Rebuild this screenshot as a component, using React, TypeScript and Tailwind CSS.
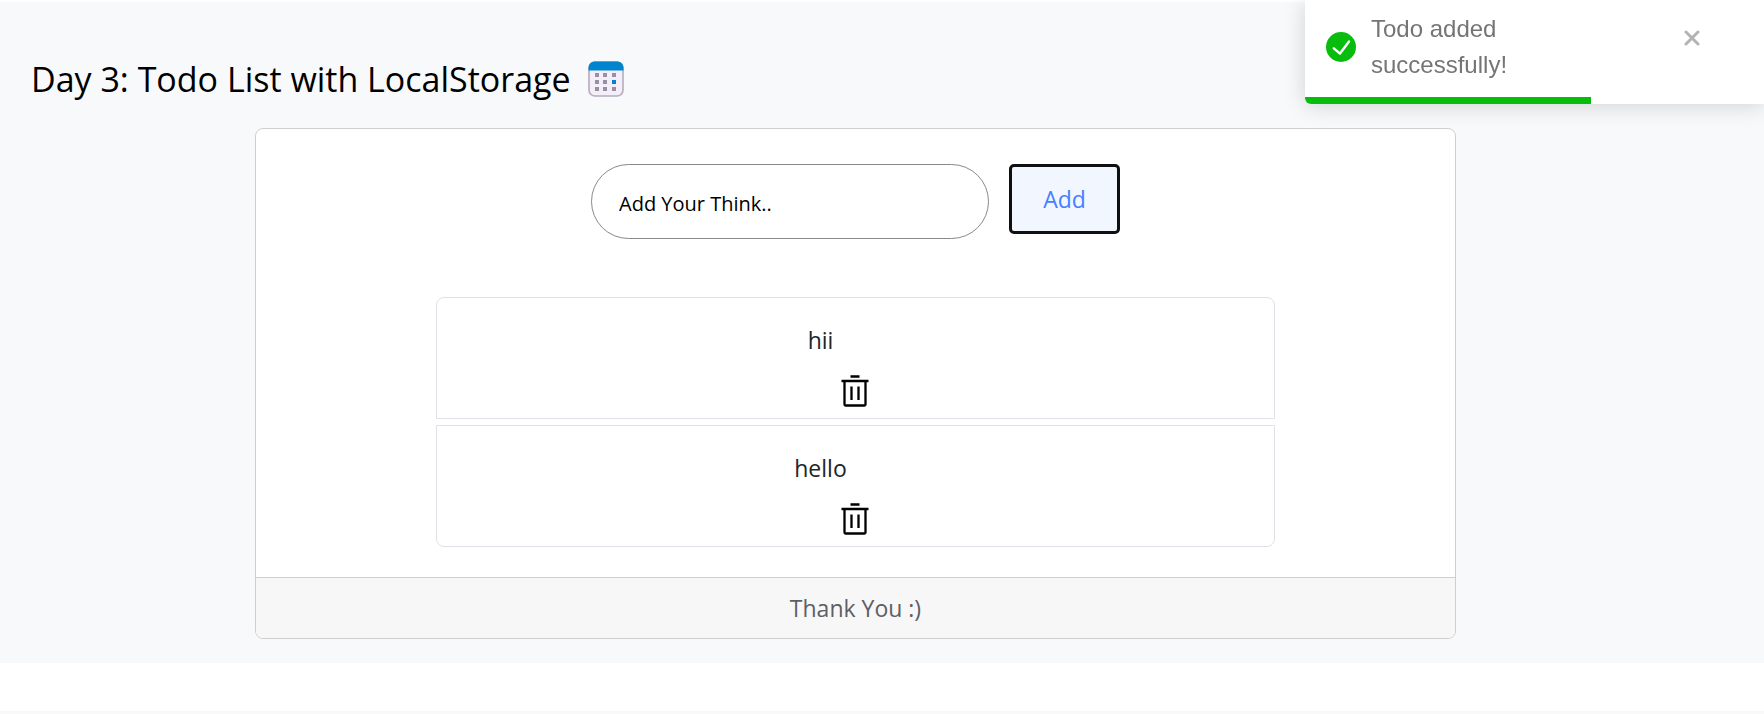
import { useState } from "react";

function CalendarIcon() {
  const cols = [7, 15, 24];
  const rows = [12, 19, 26];
  return (
    <svg viewBox="0 0 36 36" className="size-9 shrink-0" aria-hidden="true">
      <rect x="1" y="1" width="34" height="34" rx="6" fill="#f3eef8" stroke="#b4acbc" strokeWidth="1.6" />
      <path d="M.5 9.500V6.500A6 6 0 0 1 6.500 .5h23a6 6 0 0 1 6 6V9.500z" fill="#0084ce" />
      {rows.map((y) =>
        cols.map((x) => (
          <rect
            key={`${x}-${y}`}
            x={x}
            y={y}
            width="4"
            height="4"
            fill={x === 24 && y === 19 ? "#0084ce" : "#998ea4"}
          />
        ))
      )}
    </svg>
  );
}

function TrashIcon() {
  return (
    <svg viewBox="0 0 28 32" className="h-8 w-7" fill="none" stroke="#000" strokeWidth="2.300" aria-hidden="true">
      <path d="M9.500 1.500h9M.5 6h27" />
      <path d="M3.500 6v23.500a1 1 0 0 0 1 1h19a1 1 0 0 0 1-1V6" />
      <path d="M10.500 11.500V25M17.500 11.500V25" />
    </svg>
  );
}

function Toast({ onClose }: { onClose: () => void }) {
  return (
    <div
      role="status"
      className="fixed top-0 right-0 flex h-[104px] w-[459px] flex-col overflow-hidden rounded-bl-md bg-white font-['Liberation_Sans',Arial,sans-serif] shadow-[0_2px_22px_rgba(0,0,0,0.16)]"
    >
      <div className="flex grow items-start pr-16 pl-[21px]">
        <svg viewBox="0 0 30 30" className="mt-8 size-[30px] shrink-0" aria-hidden="true">
          <circle cx="15" cy="15" r="15" fill="#07bc0c" />
          <path d="M7.800 16.300l6.200 5.200L23 9.500" fill="none" stroke="#fff" strokeWidth="2.400" strokeLinecap="round" strokeLinejoin="round" />
        </svg>
        <p className="mt-[11px] ml-[15px] w-48 text-2xl leading-9 text-[#757575]">Todo added successfully!</p>
        <button type="button" aria-label="Close" onClick={onClose} className="mt-[30px] ml-auto">
          <svg viewBox="0 0 16 16" className="size-4" fill="none" stroke="#b3b3b3" strokeWidth="3" strokeLinecap="round">
            <path d="M2 2l12 12M14 2L2 14" />
          </svg>
        </button>
      </div>
      <div className="h-[7px] w-[286px] bg-[#07bc0c]" />
    </div>
  );
}

export default function App() {
  const [todos, setTodos] = useState(["hii", "hello"]);
  const [draft, setDraft] = useState("");
  const [toast, setToast] = useState(true);

  const add = () => {
    if (!draft.trim()) return;
    setTodos([...todos, draft.trim()]);
    setDraft("");
    setToast(true);
  };

  return (
    <div className="flex min-h-screen flex-col bg-white pt-0.5 font-['Open_Sans','Noto_Sans',sans-serif] text-[#212529]">
      <main className="bg-[#f8f9fb] pt-[52px] pr-[53px] pb-6">
        <h1 className="flex items-center gap-[17px] pl-[31px] text-[34px] leading-[50px] text-black">
          Day 3: Todo List with LocalStorage
          <CalendarIcon />
        </h1>
        <section className="mx-auto mt-6 max-w-[1201px] overflow-hidden rounded-lg border border-[#cfcfcf] bg-white text-center">
          <form
            className="flex items-start justify-center gap-5 pt-[35px]"
            onSubmit={(e) => {
              e.preventDefault();
              add();
            }}
          >
            <input
              aria-label="Add Your Think.."
              placeholder="Add Your Think.."
              value={draft}
              onChange={(e) => setDraft(e.target.value)}
              className="h-[75px] w-[398px] rounded-full border border-[#888] bg-white px-[27px] pt-1 text-xl text-black outline-none placeholder:text-black"
            />
            <button
              type="submit"
              className="h-[70px] w-[111px] rounded-[5px] border-3 border-[#101010] bg-[#f2f7ff] text-[23px] text-[#4480ff]"
            >
              Add
            </button>
          </form>
          <ul className="mx-auto mt-[58px] flex w-[70%] flex-col gap-1.5">
            {todos.map((todo, i) => (
              <li
                key={i}
                className="flex flex-col items-center border border-[#dee2e6] bg-white pt-6 pb-[11px] first:rounded-t-lg last:rounded-b-lg"
              >
                <span className="pr-[70px] text-[23px] leading-9">{todo}</span>
                <button
                  type="button"
                  aria-label={`Delete ${todo}`}
                  onClick={() => setTodos(todos.filter((_, n) => n !== i))}
                  className="mt-[17px]"
                >
                  <TrashIcon />
                </button>
              </li>
            ))}
          </ul>
          <footer className="mt-[30px] border-t border-[#cfcfcf] bg-[#f7f7f7] py-3 text-[23px] leading-9 text-[#5c6065]">
            Thank You :)
          </footer>
        </section>
      </main>
      <div className="mt-auto h-[3px] bg-[#f9f9f9]" />
      {toast && <Toast onClose={() => setToast(false)} />}
    </div>
  );
}
